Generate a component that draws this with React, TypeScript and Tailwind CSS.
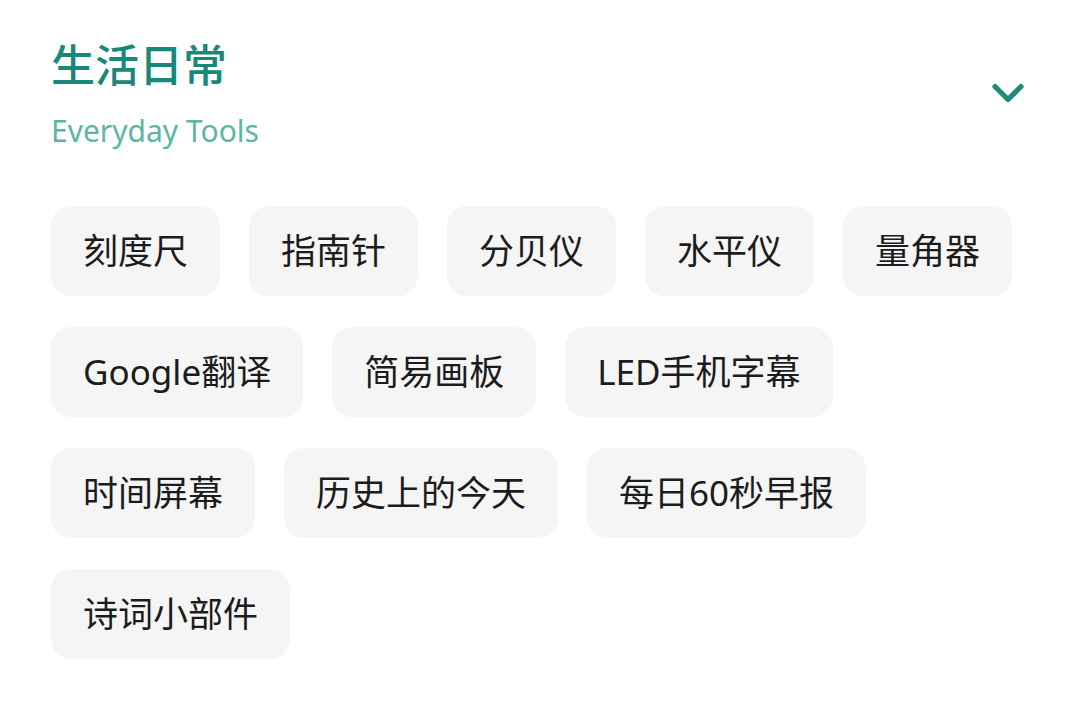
import { ChevronDown } from "lucide-react"

const rows = [
  ["刻度尺", "指南针", "分贝仪", "水平仪", "量角器"],
  ["Google翻译", "简易画板", "LED手机字幕"],
  ["时间屏幕", "历史上的今天", "每日60秒早报"],
  ["诗词小部件"],
]

export default function App() {
  return (
    <div
      className="min-h-[701px] w-[1080px] bg-white"
      style={{ fontFamily: '"Noto Sans", "Noto Sans CJK SC", sans-serif' }}
    >
      <div className="flex items-start justify-between pl-[51px] pr-[46px] pt-[39px]">
        <div className="flex flex-col gap-[22px]">
          <h1 className="text-[44px] leading-[52px] font-medium text-[#18887b]">生活日常</h1>
          <p className="text-[30px] leading-[36px] text-[#5cb5a6]">Everyday Tools</p>
        </div>
        <ChevronDown className="mt-[28px] h-[52px] w-[52px] text-[#1d8a7c]" strokeWidth={2.4} />
      </div>

      <div className="flex flex-col gap-[31px] pl-[51px] pt-[57px]">
        {rows.map((row, i) => (
          <div key={i} className="flex gap-[29px]">
            {row.map((tool) => (
              <div
                key={tool}
                className="flex h-[90px] items-center rounded-[20px] bg-[#f5f5f5] px-[32px] text-[35px] text-[#1c1c1c]"
              >
                {tool}
              </div>
            ))}
          </div>
        ))}
      </div>
    </div>
  )
}
